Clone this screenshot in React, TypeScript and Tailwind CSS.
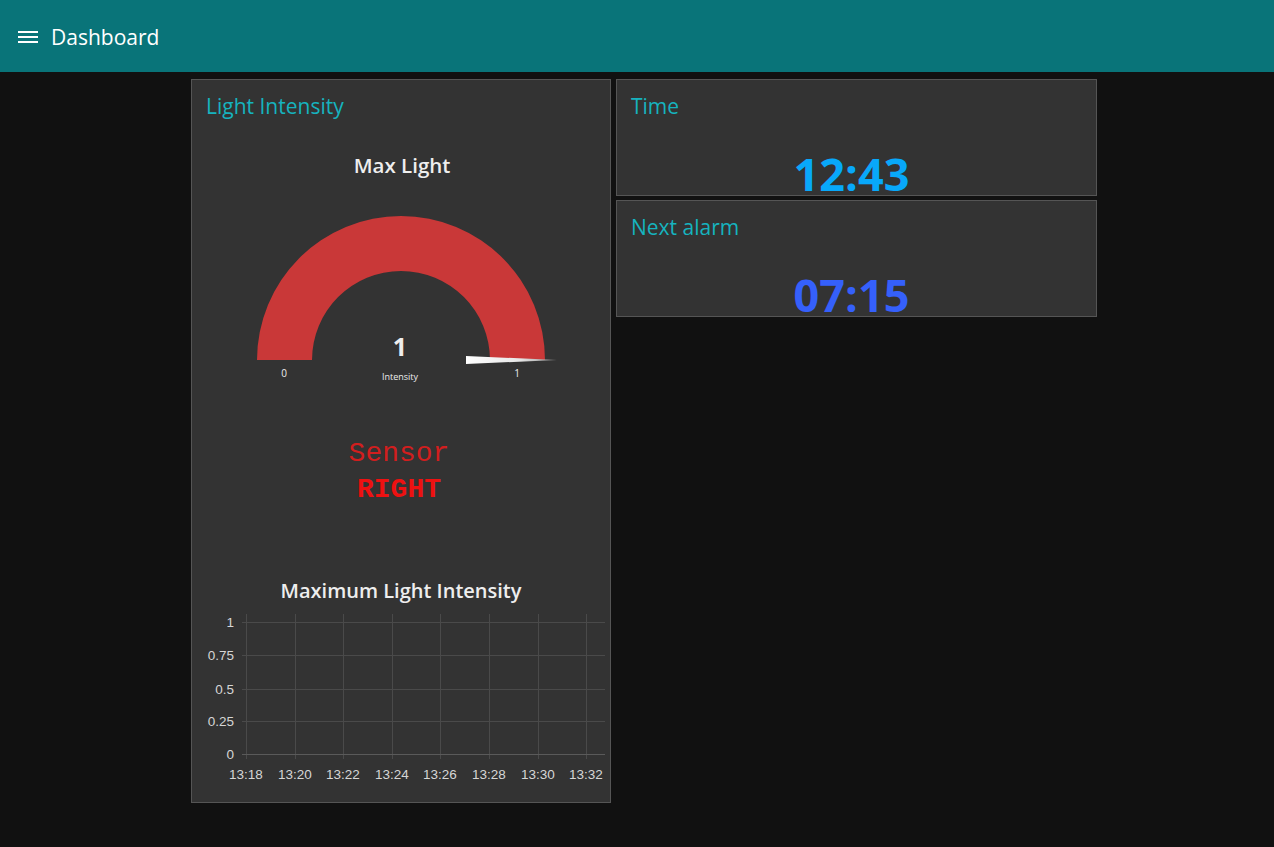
import React from "react";

const font = { fontFamily: '"Open Sans", "Noto Sans", sans-serif' };

function Gauge() {
  const cx = 209;
  const cy = 181;
  const ro = 144;
  const ri = 89;
  const d = `M ${cx - ro} ${cy} A ${ro} ${ro} 0 0 1 ${cx + ro} ${cy} L ${cx + ri} ${cy} A ${ri} ${ri} 0 0 0 ${cx - ri} ${cy} Z`;
  return (
    <svg width="418" height="221" viewBox="0 0 418 221" className="block">
      <defs>
        <linearGradient id="needle" x1="0" x2="1" y1="0" y2="0">
          <stop offset="0" stopColor="#ffffff" />
          <stop offset="0.6" stopColor="#e6e6e6" />
          <stop offset="1" stopColor="#8a8a8a" />
        </linearGradient>
      </defs>
      <path d={d} fill="#c93838" />
      <polygon points="274,177 365,181 274,185" fill="url(#needle)" />
      <text x="92" y="198" fill="#eeeeee" fontSize="10" textAnchor="middle" style={font}>0</text>
      <text x="325" y="198" fill="#eeeeee" fontSize="10" textAnchor="middle" style={font}>1</text>
      <text x="208" y="177" fill="#eeeeee" fontSize="25" fontWeight="700" textAnchor="middle" style={font}>1</text>
      <text x="208" y="201" fill="#eeeeee" fontSize="9" textAnchor="middle" style={font}>Intensity</text>
    </svg>
  );
}

function Chart() {
  const xs = [54, 103, 151, 200, 248, 297, 346, 394];
  const xl = ["13:18", "13:20", "13:22", "13:24", "13:26", "13:28", "13:30", "13:32"];
  const ys = [17, 50, 84, 116, 149];
  const yl = ["1", "0.75", "0.5", "0.25", "0"];
  const lf = { fontFamily: '"Liberation Sans", Arial, sans-serif' };
  return (
    <svg width="418" height="195" viewBox="0 0 418 195" className="block">
      {xs.map((x) => (
        <line key={x} x1={x + 0.5} x2={x + 0.5} y1="9" y2="154" stroke="#4a4a4a" strokeWidth="1" />
      ))}
      {ys.map((y, i) => (
        <g key={y}>
          <line x1="50" x2="413" y1={y + 0.5} y2={y + 0.5} stroke={i === 4 ? "#5a5a5a" : "#4a4a4a"} strokeWidth="1" />
          <text x="42" y={y + 5} fill="#d6d6d6" fontSize="13.5" textAnchor="end" style={lf}>{yl[i]}</text>
        </g>
      ))}
      {xs.map((x, i) => (
        <text key={xl[i]} x={x} y="174" fill="#d6d6d6" fontSize="13.5" textAnchor="middle" style={lf}>{xl[i]}</text>
      ))}
    </svg>
  );
}

function ValueCard({ title, value, color }: { title: string; value: string; color: string }) {
  return (
    <div className="h-[117px] overflow-hidden border border-[#555555] bg-[#333333]">
      <div className="pl-[14px] pt-[12px] text-[21px] leading-[28px] text-[#16b3bf]">{title}</div>
      <div
        className="mt-[31px] text-center text-[45px] font-bold leading-[45px] pr-[10px]"
        style={{ color }}
      >
        {value}
      </div>
    </div>
  );
}

export default function App() {
  return (
    <div className="min-h-[847px] w-full bg-[#111111]" style={font}>
      <header className="flex h-[72px] items-center bg-[#097479] pl-[18px] text-white">
        <div className="flex w-[20px] flex-col gap-[3px] mt-[2px]">
          <span className="block h-[2px] w-[20px] bg-white" />
          <span className="block h-[2px] w-[20px] bg-white" />
          <span className="block h-[2px] w-[20px] bg-white" />
        </div>
        <span className="ml-[13px] text-[21px] leading-[28px] mt-[2px]">Dashboard</span>
      </header>
      <main className="flex items-start gap-[5px] pl-[191px] pt-[7px]">
        <section className="h-[724px] w-[420px] overflow-hidden border border-[#555555] bg-[#333333]">
          <div className="pl-[14px] pt-[12px] text-[21px] leading-[28px] text-[#16b3bf]">Light Intensity</div>
          <div className="mt-[31px] text-center text-[20.5px] font-semibold leading-[28px] text-[#eeeeee] pl-[2px]">Max Light</div>
          <Gauge />
          <div className="mt-[36px] text-center pr-[4px]" style={{ fontFamily: '"Liberation Mono", "Courier New", monospace' }}>
            <div className="text-[28px] leading-[36px] text-[#d21e1e]">Sensor</div>
            <div className="text-[28px] font-bold leading-[36px] text-[#ee1111]">RIGHT</div>
          </div>
          <div className="mt-[69px] text-center text-[20px] font-semibold leading-[28px] text-[#eeeeee]">Maximum Light Intensity</div>
          <Chart />
        </section>
        <div className="flex w-[481px] flex-col gap-[4px]">
          <ValueCard title="Time" value="12:43" color="#08a8fa" />
          <ValueCard title="Next alarm" value="07:15" color="#3560fb" />
        </div>
      </main>
    </div>
  );
}
